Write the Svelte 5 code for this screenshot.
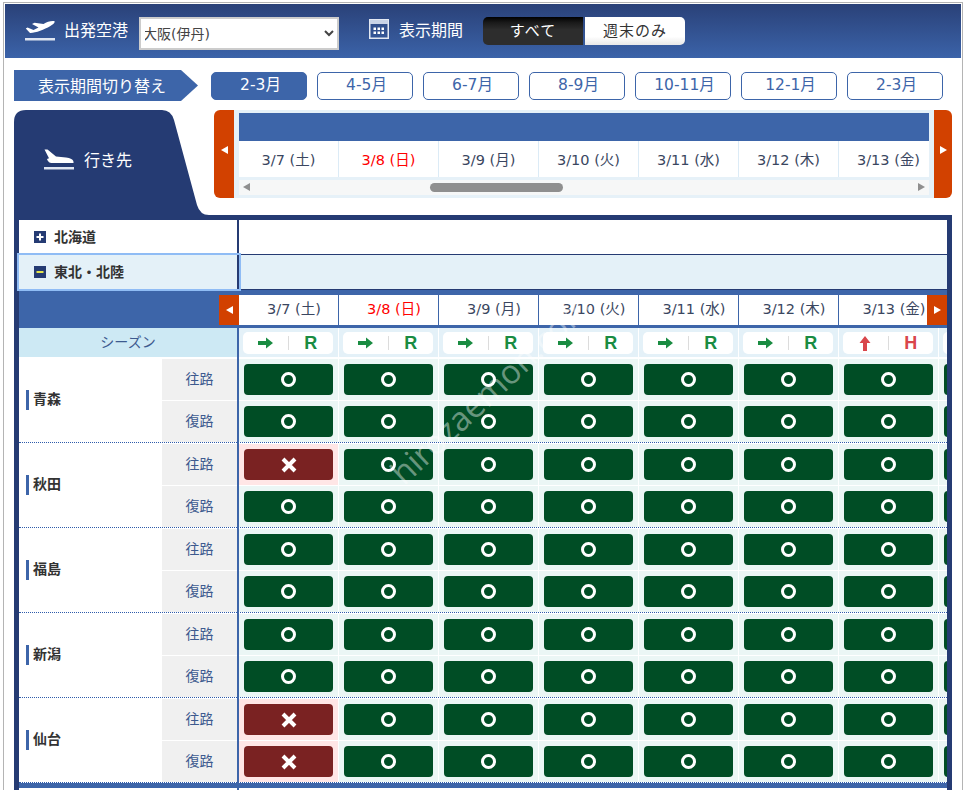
<script>
  const months = ['2-3月', '4-5月', '6-7月', '8-9月', '10-11月', '12-1月', '2-3月'];
  const dates = [
    { t: '3/7 (土)' }, { t: '3/8 (日)', red: true }, { t: '3/9 (月)' }, { t: '3/10 (火)' },
    { t: '3/11 (水)' }, { t: '3/12 (木)' }, { t: '3/13 (金)' }
  ];
  const seasons = ['R', 'R', 'R', 'R', 'R', 'R', 'H', ''];
  const columns = [0, 1, 2, 3, 4, 5, 6, 7];
  const groups = [
    { name: '青森', out: [], back: [] },
    { name: '秋田', out: [0], back: [] },
    { name: '福島', out: [], back: [] },
    { name: '新潟', out: [], back: [] },
    { name: '仙台', out: [0], back: [0] }
  ];
</script>

<div class="page">
  <header class="top">
    <svg class="plane" width="30" height="21" viewBox="0 0 30 21">
      <path fill="#fff" d="M29.5 1.2C26 .6 22 2 18.5 4L9.5 2.8 7 4l6.5 3.4-5 2.6-6-2.4L.8 8.6 5 13c5 .3 14.500-3.500 20-6.700 3-1.800 5.500-4 4.500-5.100z"/>
      <rect y="18" width="30" height="2.500" fill="#dfe6f2"/>
    </svg>
    <span class="toplabel first">出発空港</span>
    <select class="airport">
      <option>大阪(伊丹)</option>
    </select>
    <svg class="cal" width="20" height="20" viewBox="0 0 20 20">
      <rect x=".75" y=".75" width="18.500" height="18.500" fill="none" stroke="#e3e8f2" stroke-width="1.500"/>
      <rect x="1" y="1" width="18" height="4" fill="#c9d3e6"/>
      {#each [4.500, 8.500, 12.500] as x}
        <rect {x} y="8.500" width="2.500" height="2.500" fill="#fff"/>
        <rect {x} y="12.500" width="2.500" height="2.500" fill="#fff"/>
      {/each}
    </svg>
    <span class="toplabel second">表示期間</span>
    <div class="toggle">
      <span class="tg on">すべて</span>
      <span class="tg off">週末のみ</span>
    </div>
  </header>

  <nav class="periods">
    <div class="periodlabel">表示期間切り替え</div>
    <div class="months">
      {#each months as m, i}
        <span class="month" class:active={i === 0}>{m}</span>
      {/each}
    </div>
  </nav>

  <section class="dest">
    <div class="tab">
      <svg class="tabshape" width="200" height="105" viewBox="0 0 200 105">
        <path fill="#253b73" d="M0 105V12Q0 0 12 0H148Q157 0 160 10L183 95Q186 105 195 105Z"/>
      </svg>
      <svg class="landing" width="30" height="22" viewBox="0 0 30 22">
        <path fill="#fff" d="M.5 1.500H3.500L12 8.500l10 1c4 .4 7.500 2 7.500 4.500v1H8.500C5 15 4 13.500 3 11l2-.8z"/>
        <rect y="19" width="30" height="2.500" fill="#dfe6f2"/>
      </svg>
      <span class="tabtext">行き先</span>
    </div>
    <div class="scroller">
      <div class="sbtn left"><i class="tri l"></i></div>
      <div class="smid">
        <div class="sbar"></div>
        <div class="sdates">
          {#each dates as d}
            <div class="sdate" class:red={d.red}>{d.t}</div>
          {/each}
        </div>
        <div class="strack">
          <i class="sarrow l"></i>
          <div class="thumb"></div>
          <i class="sarrow r"></i>
        </div>
      </div>
      <div class="sbtn right"><i class="tri r"></i></div>
    </div>
  </section>

  <div class="frame">
    <div class="region">
      <div class="rname">
        <svg class="pm" width="12" height="12" viewBox="0 0 12 12">
          <rect width="12" height="12" fill="#253b73"/>
          <rect x="2.500" y="5" width="7" height="2" fill="#fff"/>
          <rect x="5" y="2.500" width="2" height="7" fill="#fff"/>
        </svg>
        <span class="rtext">北海道</span>
      </div>
      <div class="rrest"></div>
    </div>
    <div class="region open">
      <div class="rname focus">
        <svg class="pm" width="12" height="12" viewBox="0 0 12 12">
          <rect width="12" height="12" fill="#253b73"/>
          <rect x="2.500" y="5" width="7" height="2" fill="#e6e64c"/>
        </svg>
        <span class="rtext">東北・北陸</span>
      </div>
      <div class="rrest"></div>
    </div>

    <div class="band">
      <div class="bdates">
        {#each dates as d}
          <div class="bdate" class:red={d.red}>{d.t}</div>
        {/each}
      </div>
      <div class="bbtn bl"><i class="tri l"></i></div>
      <div class="bbtn br"><i class="tri r"></i></div>
    </div>

    <div class="table">
      <div class="seasonrow">
        <div class="seasonhead">シーズン</div>
        <div class="cells">
          {#each seasons as s}
            <div class="scell">
              <div class="pill">
                {#if s}
                  <span class="half">
                    {#if s === 'R'}
                      <svg width="15" height="12" viewBox="0 0 15 12"><path fill="#1a8c42" d="M0 4h8V.5L15 6l-7 5.500V8H0z"/></svg>
                    {:else}
                      <svg width="12" height="15" viewBox="0 0 12 15"><path fill="#d9464b" d="M6 0l5.500 7H8V15H4V7H.5z"/></svg>
                    {/if}
                  </span>
                  <span class="sep"></span>
                  <span class="half letter" class:h={s === 'H'}>{s}</span>
                {/if}
              </div>
            </div>
          {/each}
        </div>
      </div>

      <div class="groups">
        {#each groups as g}
          <div class="group">
            <div class="gname"><span class="gbar"></span><span class="gtext">{g.name}</span></div>
            <div class="legs">
              {#each [{ l: '往路', x: g.out }, { l: '復路', x: g.back }] as leg}
                <div class="leg">
                  <div class="leglabel">{leg.l}</div>
                  <div class="cells">
                    {#each columns as c}
                      <div class="cell" class:no={leg.x.includes(c)}>
                        <div class="seat">
                          {#if leg.x.includes(c)}
                            <svg width="16" height="16" viewBox="0 0 16 16"><path d="M2 2l12 12M14 2L2 14" stroke="#fff" stroke-width="4" fill="none"/></svg>
                          {:else}
                            <span class="ring"></span>
                          {/if}
                        </div>
                      </div>
                    {/each}
                  </div>
                </div>
              {/each}
            </div>
          </div>
        {/each}
      </div>
      <div class="tablefoot"></div>
      <div class="vline"></div>
    </div>
  </div>

  <div class="watermark">hirozaemon.com</div>
</div>

<style>
  :global(html), :global(body) { margin: 0; overflow: hidden; height: 790px; background: #fff; }
  .page {
    position: relative;
    box-sizing: border-box;
    width: 960px;
    height: 800px;
    margin: 2px 0 0 3px;
    padding: 1px;
    border: 1px solid #b4b4b4;
    border-bottom: 0;
    overflow: hidden;
    font-family: "Noto Sans CJK JP", "Noto Sans", sans-serif;
    color: #333;
  }
  .top {
    display: flex;
    align-items: center;
    height: 54px;
    padding-left: 20px;
    background: linear-gradient(#2a4178, #3b63a9);
    color: #fff;
  }
  .plane { margin-top: -2px; }
  .toplabel { font-size: 16px; line-height: 24px; margin-top: -4px; }
  .toplabel.first { margin-left: 9px; }
  .toplabel.second { margin-left: 10px; }
  .airport {
    box-sizing: border-box;
    width: 200px;
    height: 33px;
    margin: 5px 30px 0 11px;
    padding: 0;
    border: 2px solid #ccc;
    border-radius: 0;
    background-color: #fff;
    color: #444;
    font-family: "DejaVu Sans", "Noto Sans CJK JP", sans-serif;
    font-size: 14px;
    text-indent: -2px;
  }
  .cal { margin-top: -4px; }
  .toggle { display: flex; margin-left: 20px; }
  .tg {
    box-sizing: border-box;
    display: flex;
    align-items: center;
    justify-content: center;
    width: 100px;
    height: 28px;
    padding-bottom: 3px;
    font-size: 15px;
    letter-spacing: 1px;
  }
  .tg.on {
    background: linear-gradient(#000 0, #1a1a1a 20%, #2d2d2d 45%);
    border-radius: 5px 0 0 5px;
    color: #fff;
  }
  .tg.off {
    margin-left: 2px;
    background: linear-gradient(#fff 70%, #e8e8e8);
    border-radius: 0 5px 5px 0;
    color: #333;
  }

  .periods { display: flex; align-items: center; margin: 12px 0 0 9px; height: 31px; }
  .periodlabel {
    box-sizing: border-box;
    width: 184px;
    height: 31px;
    padding-left: 24px;
    background: #3d65a9;
    clip-path: polygon(0 0, 167px 0, 184px 50%, 167px 100%, 0 100%);
    color: #fff;
    font-size: 16px;
    line-height: 30px;
  }
  .months { display: flex; gap: 10px; margin-left: 13px; }
  .month {
    box-sizing: border-box;
    width: 96px;
    height: 28px;
    padding-left: 3px;
    border: 1px solid #3d65a9;
    border-radius: 5px;
    color: #3d65a9;
    font-family: "DejaVu Sans", "Noto Sans CJK JP", sans-serif;
    font-size: 15.500px;
    line-height: 24px;
    text-align: center;
  }
  .month.active { background: #3d65a9; color: #fff; }

  .dest { display: flex; margin: 9px 0 0 9px; height: 105px; }
  .tab { position: relative; width: 200px; height: 105px; color: #fff; }
  .tabshape { position: absolute; inset: 0; }
  .landing { position: absolute; left: 30px; top: 38px; }
  .tabtext { position: absolute; left: 70px; top: 37px; font-size: 16px; line-height: 24px; }
  .scroller { display: flex; width: 738px; height: 88px; }
  .sbtn {
    display: flex;
    align-items: center;
    justify-content: center;
    background: #d24100;
    padding-bottom: 8px;
    box-sizing: border-box;
  }
  .sbtn.left { width: 20px; border-radius: 6px 0 0 6px; }
  .sbtn.right { width: 18px; border-radius: 0 6px 6px 0; }
  .tri { display: block; width: 0; height: 0; border-style: solid; }
  .tri.l { border-width: 4px 7px 4px 0; border-color: transparent #fff transparent transparent; }
  .tri.r { border-width: 4px 0 4px 7px; border-color: transparent transparent transparent #fff; }
  .smid { box-sizing: border-box; width: 700px; padding: 3px 5px; background: #e6f1f8; }
  .sbar { height: 28px; background: #3d65a9; }
  .sdates { display: flex; height: 36px; overflow: hidden; background: #fff; }
  .sdate {
    flex: 0 0 100px;
    box-sizing: border-box;
    border-right: 1px solid #dcebf6;
    color: #3a4660;
    font-family: "DejaVu Sans", "Noto Sans CJK JP", sans-serif;
    font-size: 14.500px;
    line-height: 38px;
    text-align: center;
  }
  .red { color: #f00 !important; }
  .strack {
    position: relative;
    height: 15px;
    margin-top: 3px;
    background: #f6f7f7;
  }
  .thumb {
    position: absolute;
    left: 191px;
    top: 3px;
    width: 133px;
    height: 9px;
    border-radius: 5px;
    background: #8f8f8f;
  }
  .sarrow { position: absolute; top: 3px; width: 0; height: 0; border-style: solid; }
  .sarrow.l { left: 4px; border-width: 4.500px 7px 4.500px 0; border-color: transparent #8f8f8f transparent transparent; }
  .sarrow.r { right: 4px; border-width: 4.500px 0 4.500px 7px; border-color: transparent transparent transparent #8f8f8f; }

  .frame {
    box-sizing: border-box;
    width: 938px;
    margin-left: 9px;
    border: 5px solid #253b73;
    border-bottom: 0;
    background: #fff;
  }
  .region { display: flex; height: 35px; border-bottom: 1px solid #253b73; box-sizing: border-box; }
  .rname {
    position: relative;
    display: flex;
    align-items: center;
    box-sizing: border-box;
    width: 220px;
    padding-left: 15px;
    border-right: 2px solid #253b73;
    color: #333;
    font-size: 14px;
    font-weight: 700;
  }
  .rtext { margin-top: -2px; }
  .pm { margin-right: 8px; }
  .region.open { background: #e4f1f8; }
  .focus { outline: 2px solid #8fbcf5; z-index: 1; }
  .band { position: relative; box-sizing: border-box; height: 38px; padding: 5px 0 3px 220px; background: #3d65a9; overflow: hidden; }
  .bdates { display: flex; height: 30px; background: #fff; }
  .bdate {
    flex: 0 0 100px;
    box-sizing: border-box;
    padding-left: 11px;
    border-right: 1px solid #3d65a9;
    color: #3a4660;
    font-family: "DejaVu Sans", "Noto Sans CJK JP", sans-serif;
    font-size: 14.500px;
    line-height: 28px;
    text-align: center;
  }
  .bbtn {
    position: absolute;
    top: 5px;
    display: flex;
    align-items: center;
    justify-content: center;
    width: 20px;
    height: 30px;
    background: #d24100;
  }
  .bbtn.bl { left: 200px; }
  .bbtn.br { right: 0; }

  .table { position: relative; overflow: hidden; }
  .seasonrow { display: flex; height: 31px; }
  .seasonhead {
    flex: 0 0 220px;
    box-sizing: border-box;
    height: 29px;
    padding-right: 2px;
    background: #cde9f4;
    color: #3d5a8f;
    font-size: 14px;
    line-height: 27px;
    text-align: center;
  }
  .cells { display: flex; flex: none; width: 800px; }
  .scell {
    flex: 0 0 100px;
    box-sizing: border-box;
    height: 29px;
    padding: 4px 5px 3px 4px;
    border-right: 1px solid #fff;
    background: #e4f1f8;
  }
  .pill { display: flex; align-items: center; height: 22px; border-radius: 5px; background: #fff; }
  .half { flex: 1; display: flex; align-items: center; justify-content: center; }
  .sep { width: 1px; height: 14px; background: #dcdcdc; }
  .letter {
    color: #1a8c42;
    font-family: "Liberation Sans", sans-serif;
    font-size: 18px;
    font-weight: 700;
    line-height: 22px;
  }
  .letter.h { color: #d9464b; }

  .groups { display: flex; flex-direction: column; gap: 1px; }
  .group {
    display: flex;
    box-sizing: border-box;
    height: 84px;
    border-bottom: 1px dotted #2f5cab;
  }
  .gname {
    display: flex;
    align-items: center;
    flex: 0 0 143px;
    padding: 0 0 2px 7px;
    box-sizing: border-box;
    color: #333;
    font-size: 14px;
    font-weight: 700;
  }
  .gtext { margin-top: -3px; }
  .gbar { width: 3px; height: 20px; margin-right: 4px; background: #3d65a9; }
  .legs { display: flex; flex-direction: column; gap: 1px; }
  .leg { display: flex; height: 41px; }
  .leglabel {
    flex: 0 0 77px;
    box-sizing: border-box;
    padding-right: 2px;
    background: #f0f0f0;
    color: #3d5a8f;
    font-size: 14px;
    line-height: 38px;
    text-align: center;
  }
  .cell {
    flex: 0 0 100px;
    box-sizing: border-box;
    padding: 5px;
    border-right: 1px solid #fff;
    background: #ebf6f5;
  }
  .cell.no { background: #ffe6e6; }
  .seat {
    display: flex;
    align-items: center;
    justify-content: center;
    height: 31px;
    border-radius: 4px;
    background: #004d25;
  }
  .cell.no .seat { background: #7a2222; }
  .ring { box-sizing: border-box; width: 15px; height: 15px; border: 3px solid #fff; border-radius: 50%; }
  .tablefoot { height: 5px; background: #3d65a9; margin-bottom: 20px; }
  .vline { position: absolute; left: 218px; top: 0; bottom: 0; width: 2px; background: #3d65a9; }

  .watermark {
    position: absolute;
    left: 404px;
    top: 452px;
    transform: rotate(-43deg);
    transform-origin: 0 100%;
    color: rgba(255, 255, 255, .42);
    font-family: "Open Sans", sans-serif;
    font-size: 33px;
    font-weight: 400;
    line-height: 36px;
    pointer-events: none;
    white-space: nowrap;
  }
</style>
